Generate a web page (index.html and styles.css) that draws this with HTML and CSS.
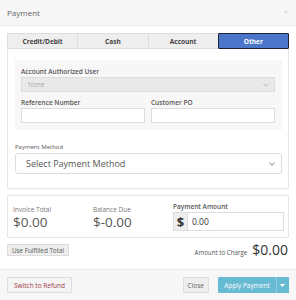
FILE: index.html
```html
<!DOCTYPE html>
<html lang="en">
<head>
    <meta charset="UTF-8">
    <title>Payment</title>
    <link rel="stylesheet" href="styles.css">
</head>
<body>
    <div class="modal">
        <div class="modal-header">
            <span class="modal-title">Payment</span>
            <span class="close">&times;</span>
        </div>

        <div class="modal-body">
            <div class="tabs">
                <button class="tab">Credit/Debit</button>
                <button class="tab">Cash</button>
                <button class="tab">Account</button>
                <button class="tab active">Other</button>
            </div>

            <div class="panel">
                <div class="account-box">
                    <label class="field-label">Account Authorized User</label>
                    <div class="select disabled">
                        <span>None</span>
                        <svg class="chevron" width="6" height="4" viewBox="0 0 6 4"><path d="M0.5 0.8 L3 3.2 L5.5 0.8" fill="none" stroke="#aaa" stroke-width="0.9"/></svg>
                    </div>
                    <div class="row">
                        <div class="col">
                            <label class="field-label">Reference Number</label>
                            <div class="input"></div>
                        </div>
                        <div class="col">
                            <label class="field-label">Customer PO</label>
                            <div class="input"></div>
                        </div>
                    </div>
                </div>

                <label class="method-label">Payment Method</label>
                <div class="select big">
                    <span>Select Payment Method</span>
                    <svg class="chevron" width="6" height="4" viewBox="0 0 6 4"><path d="M0.5 0.8 L3 3.2 L5.5 0.8" fill="none" stroke="#777" stroke-width="1"/></svg>
                </div>
            </div>

            <div class="totals">
                <div class="stat">
                    <div class="stat-label">Invoice Total</div>
                    <div class="stat-value">$0.00</div>
                </div>
                <div class="stat">
                    <div class="stat-label">Balance Due</div>
                    <div class="stat-value">$-0.00</div>
                </div>
                <div class="pay-amount">
                    <label class="field-label">Payment Amount</label>
                    <div class="input-group">
                        <span class="addon">$</span>
                        <span class="amount">0.00</span>
                    </div>
                </div>
            </div>

            <div class="charge-row">
                <button class="btn-small">Use Fulfilled Total</button>
                <div class="charge">
                    <span class="charge-label">Amount to Charge</span>
                    <span class="charge-value">$0.00</span>
                </div>
            </div>
        </div>

        <div class="modal-footer">
            <button class="btn btn-refund">Switch to Refund</button>
            <div class="actions">
                <button class="btn btn-close">Close</button>
                <div class="split">
                    <button class="btn btn-apply">Apply Payment</button>
                    <button class="btn btn-caret"><svg width="5" height="3" viewBox="0 0 5 3"><path d="M0 0 L5 0 L2.5 3 Z" fill="#fff"/></svg></button>
                </div>
            </div>
        </div>
    </div>
</body>
</html>
```

FILE: styles.css
```css
body {
    margin: 0;
    font-family: "Open Sans", Arial, sans-serif;
    background-color: #fff;
    color: #555;
}
button {
    font-family: inherit;
    cursor: pointer;
}
.modal {
    width: 296px;
    height: 300px;
    overflow: hidden;
    display: flex;
    flex-direction: column;
}
.modal-header {
    height: 25px;
    padding: 0 8px 0 7px;
    display: flex;
    align-items: center;
    justify-content: space-between;
    background-color: #f7f7f7;
    border-bottom: 1px solid #ececec;
    flex-shrink: 0;
}
.modal-title {
    font-size: 8px;
    color: #666;
}
.close {
    font-size: 7px;
    color: #ccc;
}
.modal-body {
    padding: 7px 7px 0 7px;
    flex: 1;
}
.tabs {
    display: flex;
    height: 16px;
}
.tab {
    flex: 1;
    margin: 0;
    padding: 0;
    font-size: 6.5px;
    font-weight: bold;
    color: #444;
    background-color: #eee;
    border: 1px solid #ddd;
    border-right: none;
}
.tab.active {
    background-color: #4a75c9;
    color: #fff;
    border: 1px solid #223;
    border-radius: 1px;
}
.panel {
    border: 1px solid #e6e6e6;
    border-top: none;
    padding: 11px 6px 14px 7px;
}
.account-box {
    background-color: #f7f7f7;
    padding: 7px 7px 7px 6px;
}
.field-label {
    display: block;
    font-size: 6.5px;
    font-weight: 600;
    line-height: 9px;
    margin-bottom: 1px;
    color: #555;
}
.select {
    display: flex;
    align-items: center;
    justify-content: space-between;
    border: 1px solid #ddd;
    background-color: #fff;
    box-sizing: border-box;
}
.select.disabled {
    height: 15px;
    padding: 0 5px 0 6px;
    background-color: #e9e9e9;
    color: #aaa;
    font-size: 6.5px;
}
.row {
    display: flex;
    gap: 6px;
    margin-top: 6px;
}
.col {
    flex: 1;
}
.input {
    height: 15px;
    background-color: #fff;
    border: 1px solid #ddd;
    box-sizing: border-box;
}
.method-label {
    display: block;
    margin-top: 13px;
    font-size: 6px;
    line-height: 9px;
    margin-bottom: 1px;
    color: #555;
}
.select.big {
    height: 21px;
    padding: 0 6px 0 10px;
    border-radius: 3px;
    font-size: 9px;
    color: #555;
}
.totals {
    margin-top: 6px;
    border: 1px solid #e6e6e6;
    height: 43px;
    box-sizing: border-box;
    padding: 6px 4px 0 5px;
    display: flex;
}
.stat {
    width: 80px;
    padding-top: 3px;
}
.stat-label {
    font-size: 6.5px;
    line-height: 9px;
    color: #777;
}
.stat-value {
    font-size: 13.5px;
    line-height: 16px;
    color: #555;
}
.pay-amount {
    flex: 1;
}
.input-group {
    display: flex;
    height: 19px;
    border: 1px solid #ddd;
    box-sizing: border-box;
}
.addon {
    width: 13px;
    background-color: #eee;
    border-right: 1px solid #ddd;
    font-size: 13px;
    font-weight: bold;
    color: #333;
    display: flex;
    align-items: center;
    justify-content: center;
}
.amount {
    padding-left: 4px;
    font-size: 8.5px;
    color: #333;
    display: flex;
    align-items: center;
}
.charge-row {
    display: flex;
    align-items: center;
    justify-content: space-between;
    height: 14px;
    margin-top: 5px;
    padding-right: 1px;
}
.btn-small {
    height: 12px;
    padding: 0 4px;
    margin: 0;
    font-size: 6.3px;
    color: #555;
    background-color: #eee;
    border: 1px solid #ddd;
}
.charge {
    display: flex;
    align-items: baseline;
    gap: 5px;
}
.charge-label {
    font-size: 6.2px;
    color: #555;
}
.charge-value {
    font-size: 14px;
    line-height: 14px;
    color: #333;
}
.modal-footer {
    height: 31px;
    box-sizing: border-box;
    border-top: 1px solid #e9e9e9;
    background-color: #f7f7f7;
    padding: 0 7px;
    display: flex;
    align-items: center;
    justify-content: space-between;
    flex-shrink: 0;
}
.btn {
    height: 16px;
    margin: 0;
    padding: 0 6px;
    font-size: 6.5px;
    border: 1px solid #ddd;
    border-radius: 1px;
}
.btn-refund {
    color: #a0394a;
    background-color: #f5f5f5;
}
.actions {
    display: flex;
    gap: 9px;
}
.btn-close {
    padding: 0 4px;
    color: #666;
    background-color: #eee;
}
.split {
    display: flex;
}
.btn-apply {
    width: 58px;
    padding: 0;
    color: #fff;
    background-color: #66bad1;
    border-color: #66bad1;
}
.btn-caret {
    width: 13px;
    padding: 0;
    background-color: #66bad1;
    border-color: #66bad1;
    border-left: 1px solid #8ccbdc;
    display: flex;
    align-items: center;
    justify-content: center;
}
```
